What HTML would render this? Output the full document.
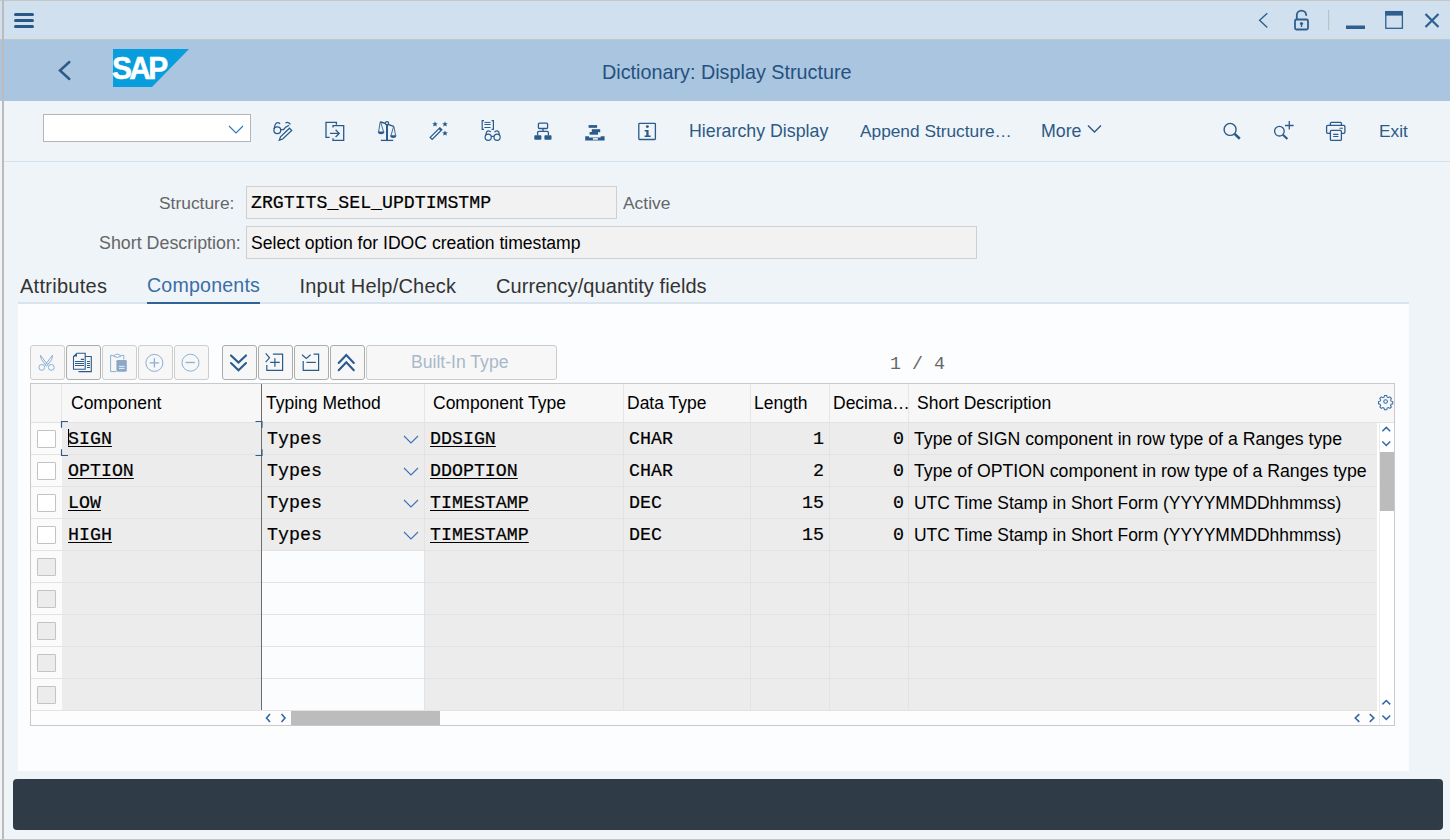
<!DOCTYPE html>
<html><head><meta charset="utf-8">
<style>
*{margin:0;padding:0;box-sizing:border-box}
html,body{width:1450px;height:840px;overflow:hidden;background:#eff4f9;font-family:"Liberation Sans",sans-serif}
.a{position:absolute}
.t{position:absolute;white-space:nowrap;line-height:1}
.mono{font-family:"Liberation Mono",monospace;-webkit-text-stroke:0.2px currentColor}
.ul{text-decoration:underline;text-decoration-thickness:1.4px;text-underline-offset:2px}
svg{position:absolute;overflow:visible}
</style></head><body>
<!-- outer frame -->
<div class="a" style="left:0;top:0;width:1450px;height:840px;background:#eff4f9"></div>
<!-- top bar -->
<div class="a" style="left:0;top:0;width:1450px;height:40px;background:#d1e0ee;border-bottom:1px solid #c3c6c9"></div>
<div class="a" style="left:0;top:0;width:1450px;height:1px;background:#c6c6c6"></div>
<!-- header band -->
<div class="a" style="left:0;top:40px;width:1450px;height:61px;background:#a9c5df"></div>
<!-- left frame line -->
<div class="a" style="left:2px;top:0;width:2px;height:840px;background:#bdbbb9"></div>
<div class="a" style="left:0;top:839px;width:1450px;height:1px;background:#c4c4c4"></div>


<!-- hamburger -->
<div class="a" style="left:14px;top:13px;width:20px;height:3px;border-radius:2px;background:#275887"></div>
<div class="a" style="left:14px;top:19px;width:20px;height:3px;border-radius:2px;background:#275887"></div>
<div class="a" style="left:14px;top:25px;width:20px;height:3px;border-radius:2px;background:#275887"></div>
<!-- top right window icons -->
<svg style="left:0;top:0" width="1450" height="40">
 <path d="M1267.3 13.2 L1259.6 20.3 L1267.3 27.4" fill="none" stroke="#2e5f8e" stroke-width="1.4"/>
 <rect x="1295" y="19.5" width="13" height="10" rx="1.5" fill="none" stroke="#2e5f8e" stroke-width="1.8"/>
 <path d="M1296.8 19.5 V15.3 a4.7 4.7 0 0 1 9.4 0 V15.8" fill="none" stroke="#2e5f8e" stroke-width="1.8"/>
 <circle cx="1301.5" cy="23.5" r="1.6" fill="#2e5f8e"/><rect x="1300.8" y="24" width="1.4" height="3" fill="#2e5f8e"/>
 <rect x="1328.2" y="10" width="1" height="20" fill="#b5bcc4"/>
 <rect x="1346" y="25.5" width="19" height="3.5" fill="#2e5f8e"/>
 <rect x="1385.8" y="11.6" width="16.6" height="16.7" fill="none" stroke="#2e5f8e" stroke-width="1.3"/>
 <rect x="1385.2" y="11" width="17.8" height="4.6" fill="#2e5f8e"/>
 <path d="M1425.5 14 L1438.5 27 M1438.5 14 L1425.5 27" stroke="#2e5f8e" stroke-width="2.2"/>
</svg>
<!-- header -->
<svg style="left:0;top:40px" width="300" height="61">
 <path d="M69.3 22 L60 30.5 L69.3 39" fill="none" stroke="#2f5a84" stroke-width="2.5" stroke-linecap="round"/>
 <path d="M113 9 H189 L152 47 H113 Z" fill="#089ddc"/>
</svg>
<div class="t" style="left:112px;top:52.5px;font-size:31.5px;font-weight:bold;color:#fff;letter-spacing:-2.8px;transform:scaleX(0.95);transform-origin:0 0;-webkit-text-stroke:0.5px #fff">SAP</div>
<div class="t" style="left:602px;top:62.5px;font-size:19.8px;color:#25517f">Dictionary: Display Structure</div>

<!-- toolbar -->
<div class="a" style="left:4px;top:161px;width:1446px;height:1px;background:#d3e0ed"></div>
<div class="a" style="left:43px;top:114px;width:208px;height:28px;background:#fff;border:1px solid #b5b5b5"></div>
<svg style="left:0;top:100px" width="1450" height="60">
 <path d="M229 26 L236 33 L243 26" fill="none" stroke="#2a78bf" stroke-width="1.15"/>
</svg>
<div class="t" style="left:689px;top:123px;font-size:17.8px;color:#2d5a85">Hierarchy Display</div>
<div class="t" style="left:860px;top:123px;font-size:17.3px;color:#2d5a85">Append Structure…</div>
<div class="t" style="left:1041px;top:123px;font-size:17.8px;color:#2d5a85">More</div>
<div class="t" style="left:1379px;top:123px;font-size:17.3px;color:#2d5a85">Exit</div>

<!-- form -->
<div class="t" style="left:159px;top:195px;font-size:17.4px;color:#666">Structure:</div>
<div class="a" style="left:246px;top:186px;width:371px;height:33px;background:#f2f2f2;border:1px solid #cfcfcf"></div>
<div class="t mono" style="left:251px;top:194px;font-size:18.2px;color:#000">ZRGTITS_SEL_UPDTIMSTMP</div>
<div class="t" style="left:623px;top:195px;font-size:17.4px;color:#666">Active</div>
<div class="t" style="left:99px;top:235px;font-size:17.85px;color:#666">Short Description:</div>
<div class="a" style="left:246px;top:226px;width:731px;height:33px;background:#f2f2f2;border:1px solid #cfcfcf"></div>
<div class="t" style="left:251px;top:235px;font-size:17.6px;color:#000">Select option for IDOC creation timestamp</div>

<!-- tabs -->
<div class="t" style="left:20px;top:276px;font-size:20px;color:#333;letter-spacing:0.28px">Attributes</div>
<div class="t" style="left:147px;top:276px;font-size:19.6px;color:#3a6ea5;letter-spacing:0.2px">Components</div>
<div class="t" style="left:299.5px;top:276px;font-size:20px;color:#333;letter-spacing:0.2px">Input Help/Check</div>
<div class="t" style="left:496px;top:276px;font-size:20px;color:#333;letter-spacing:0.07px">Currency/quantity fields</div>
<div class="a" style="left:18px;top:302px;width:1391px;height:2px;background:#dae4ef"></div>
<div class="a" style="left:147px;top:301.5px;width:113px;height:2.5px;background:#2f6297"></div>
<!-- panel -->
<div class="a" style="left:18px;top:304px;width:1391px;height:467px;background:#fcfdfe"></div>

<!-- status bar -->
<div class="a" style="left:13px;top:779px;width:1430px;height:51px;background:#2f3b47;border-radius:4px"></div>
<!-- table -->
<div class="a" style="left:30px;top:383px;width:1365px;height:343px;background:#fff;border:1px solid #c9c9c9"></div>
<div class="a" style="left:31px;top:384px;width:1363px;height:38px;background:#f7f7f7"></div>
<div class="a" style="left:31px;top:384px;width:30px;height:38px;background:#f7f7f7"></div>
<div class="a" style="left:61px;top:384px;width:1px;height:38px;background:#e6e6e6"></div>
<div class="a" style="left:424px;top:384px;width:1px;height:38px;background:#e6e6e6"></div>
<div class="a" style="left:623px;top:384px;width:1px;height:38px;background:#e6e6e6"></div>
<div class="a" style="left:750px;top:384px;width:1px;height:38px;background:#e6e6e6"></div>
<div class="a" style="left:829px;top:384px;width:1px;height:38px;background:#e6e6e6"></div>
<div class="a" style="left:908px;top:384px;width:1px;height:38px;background:#e6e6e6"></div>
<div class="a" style="left:31px;top:422px;width:31px;height:288px;background:#fbfbfb"></div>
<div class="a" style="left:62px;top:422px;width:1315px;height:288px;background:#ececec"></div>
<div class="a" style="left:262px;top:550px;width:162px;height:160px;background:#fbfcfd"></div>
<div class="a" style="left:31px;top:454px;width:1346px;height:1px;background:#e3e3e3"></div>
<div class="a" style="left:31px;top:486px;width:1346px;height:1px;background:#e3e3e3"></div>
<div class="a" style="left:31px;top:518px;width:1346px;height:1px;background:#e3e3e3"></div>
<div class="a" style="left:31px;top:550px;width:1346px;height:1px;background:#e3e3e3"></div>
<div class="a" style="left:31px;top:582px;width:1346px;height:1px;background:#e3e3e3"></div>
<div class="a" style="left:31px;top:614px;width:1346px;height:1px;background:#e3e3e3"></div>
<div class="a" style="left:31px;top:646px;width:1346px;height:1px;background:#e3e3e3"></div>
<div class="a" style="left:31px;top:678px;width:1346px;height:1px;background:#e3e3e3"></div>
<div class="a" style="left:31px;top:422px;width:1363px;height:1px;background:#e2e2e2"></div>
<div class="a" style="left:424px;top:422px;width:1px;height:288px;background:#e3e3e3"></div>
<div class="a" style="left:623px;top:422px;width:1px;height:288px;background:#e3e3e3"></div>
<div class="a" style="left:750px;top:422px;width:1px;height:288px;background:#e3e3e3"></div>
<div class="a" style="left:829px;top:422px;width:1px;height:288px;background:#e3e3e3"></div>
<div class="a" style="left:908px;top:422px;width:1px;height:288px;background:#e3e3e3"></div>
<div class="a" style="left:261px;top:384px;width:1px;height:326px;background:#6d6d6d"></div>
<div class="t" style="left:71px;top:395px;font-size:17.5px;color:#000">Component</div>
<div class="t" style="left:266px;top:395px;font-size:17.5px;color:#000">Typing Method</div>
<div class="t" style="left:433px;top:395px;font-size:17.5px;color:#000">Component Type</div>
<div class="t" style="left:627px;top:395px;font-size:17.5px;color:#000">Data Type</div>
<div class="t" style="left:754px;top:395px;font-size:17.5px;color:#000">Length</div>
<div class="t" style="left:833px;top:395px;font-size:17.5px;color:#000">Decima…</div>
<div class="t" style="left:917px;top:395px;font-size:17.5px;color:#000">Short Description</div>
<div class="a" style="left:37px;top:430px;width:19px;height:18px;background:#fff;border:1px solid #c3c3c3;border-radius:1px"></div>
<div class="a" style="left:37px;top:462px;width:19px;height:18px;background:#fff;border:1px solid #c3c3c3;border-radius:1px"></div>
<div class="a" style="left:37px;top:494px;width:19px;height:18px;background:#fff;border:1px solid #c3c3c3;border-radius:1px"></div>
<div class="a" style="left:37px;top:526px;width:19px;height:18px;background:#fff;border:1px solid #c3c3c3;border-radius:1px"></div>
<div class="a" style="left:37px;top:558px;width:19px;height:18px;background:#ececec;border:1px solid #c3c3c3;border-radius:1px"></div>
<div class="a" style="left:37px;top:590px;width:19px;height:18px;background:#ececec;border:1px solid #c3c3c3;border-radius:1px"></div>
<div class="a" style="left:37px;top:622px;width:19px;height:18px;background:#ececec;border:1px solid #c3c3c3;border-radius:1px"></div>
<div class="a" style="left:37px;top:654px;width:19px;height:18px;background:#ececec;border:1px solid #c3c3c3;border-radius:1px"></div>
<div class="a" style="left:37px;top:686px;width:19px;height:18px;background:#ececec;border:1px solid #c3c3c3;border-radius:1px"></div>
<div class="t mono ul" style="left:68px;top:430px;font-size:18.3px;color:#000">SIGN</div>
<div class="t mono" style="left:267px;top:430px;font-size:18.3px;color:#000">Types</div>
<div class="t mono ul" style="left:430px;top:430px;font-size:18.3px;color:#000">DDSIGN</div>
<div class="t mono" style="left:629px;top:430px;font-size:18.3px;color:#000">CHAR</div>
<div class="t mono" style="right:626px;top:430px;font-size:18.3px;color:#000">1</div>
<div class="t mono" style="right:546px;top:430px;font-size:18.3px;color:#000">0</div>
<div class="t" style="left:914px;top:431px;font-size:17.72px;color:#000">Type of SIGN component in row type of a Ranges type</div>
<div class="t mono ul" style="left:68px;top:462px;font-size:18.3px;color:#000">OPTION</div>
<div class="t mono" style="left:267px;top:462px;font-size:18.3px;color:#000">Types</div>
<div class="t mono ul" style="left:430px;top:462px;font-size:18.3px;color:#000">DDOPTION</div>
<div class="t mono" style="left:629px;top:462px;font-size:18.3px;color:#000">CHAR</div>
<div class="t mono" style="right:626px;top:462px;font-size:18.3px;color:#000">2</div>
<div class="t mono" style="right:546px;top:462px;font-size:18.3px;color:#000">0</div>
<div class="t" style="left:914px;top:463px;font-size:17.7px;color:#000">Type of OPTION component in row type of a Ranges type</div>
<div class="t mono ul" style="left:68px;top:494px;font-size:18.3px;color:#000">LOW</div>
<div class="t mono" style="left:267px;top:494px;font-size:18.3px;color:#000">Types</div>
<div class="t mono ul" style="left:430px;top:494px;font-size:18.3px;color:#000">TIMESTAMP</div>
<div class="t mono" style="left:629px;top:494px;font-size:18.3px;color:#000">DEC</div>
<div class="t mono" style="right:626px;top:494px;font-size:18.3px;color:#000">15</div>
<div class="t mono" style="right:546px;top:494px;font-size:18.3px;color:#000">0</div>
<div class="t" style="left:914px;top:495px;font-size:17.45px;color:#000">UTC Time Stamp in Short Form (YYYYMMDDhhmmss)</div>
<div class="t mono ul" style="left:68px;top:526px;font-size:18.3px;color:#000">HIGH</div>
<div class="t mono" style="left:267px;top:526px;font-size:18.3px;color:#000">Types</div>
<div class="t mono ul" style="left:430px;top:526px;font-size:18.3px;color:#000">TIMESTAMP</div>
<div class="t mono" style="left:629px;top:526px;font-size:18.3px;color:#000">DEC</div>
<div class="t mono" style="right:626px;top:526px;font-size:18.3px;color:#000">15</div>
<div class="t mono" style="right:546px;top:526px;font-size:18.3px;color:#000">0</div>
<div class="t" style="left:914px;top:527px;font-size:17.45px;color:#000">UTC Time Stamp in Short Form (YYYYMMDDhhmmss)</div>
<svg style="left:0;top:0" width="1450" height="840">
<path d="M404 436 L411 443 L418 436" fill="none" stroke="#3a72b0" stroke-width="1.1"/>
<path d="M404 468 L411 475 L418 468" fill="none" stroke="#3a72b0" stroke-width="1.1"/>
<path d="M404 500 L411 507 L418 500" fill="none" stroke="#3a72b0" stroke-width="1.1"/>
<path d="M404 532 L411 539 L418 532" fill="none" stroke="#3a72b0" stroke-width="1.1"/>
<path d="M61.5 427.8 V421.5 H68 M255.5 421.5 H262 V427.8 M61.5 449.2 V455.5 H68 M255.5 455.5 H262 V449.2" fill="none" stroke="#2d5b88" stroke-width="1.15"/>
<rect x="68" y="429" width="1.1" height="16.5" fill="#000"/>
</svg>
<div class="a" style="left:31px;top:710px;width:1349px;height:15px;background:#fdfdfe;border-top:1px solid #e3e3e3"></div>
<div class="a" style="left:291px;top:711px;width:149px;height:14px;background:#bcbcbc"></div>
<div class="a" style="left:1377px;top:423px;width:17px;height:302px;background:#fff;border-left:2px solid #fff"></div>
<div class="a" style="left:1379px;top:423px;width:1px;height:302px;background:#ebebeb"></div>
<div class="a" style="left:1380px;top:452px;width:14px;height:59px;background:#bcbcbc"></div>
<svg style="left:0;top:0" width="1450" height="840">
<path d="M270 714 L266.5 718 L270 722 M281.5 714 L285 718 L281.5 722" fill="none" stroke="#2f6aa6" stroke-width="1.6"/>
<path d="M1359.3 714.2 L1355.3 718 L1359.3 721.8 M1369.8 714.2 L1373.8 718 L1369.8 721.8" fill="none" stroke="#2f6aa6" stroke-width="1.6"/>
<path d="M1382.4 431.3 L1386.3 427.4 L1390.2 431.3 M1382.4 441.4 L1386.3 445.4 L1390.2 441.4" fill="none" stroke="#2f6aa6" stroke-width="1.5"/>
<path d="M1382.4 704.4 L1386.3 700.5 L1390.2 704.4 M1382.4 715.5 L1386.3 719.4 L1390.2 715.5" fill="none" stroke="#2f6aa6" stroke-width="1.5"/>
</svg>
<div class="a" style="left:30px;top:345px;width:35px;height:35px;background:#f7f7f7;border:1px solid #cdcdcd;border-radius:3px"></div>
<div class="a" style="left:66px;top:345px;width:35px;height:35px;background:#f7f7f7;border:1px solid #acacac;border-radius:3px"></div>
<div class="a" style="left:102px;top:345px;width:35px;height:35px;background:#f7f7f7;border:1px solid #cdcdcd;border-radius:3px"></div>
<div class="a" style="left:138px;top:345px;width:35px;height:35px;background:#f7f7f7;border:1px solid #cdcdcd;border-radius:3px"></div>
<div class="a" style="left:174px;top:345px;width:35px;height:35px;background:#f7f7f7;border:1px solid #cdcdcd;border-radius:3px"></div>
<div class="a" style="left:222px;top:345px;width:35px;height:35px;background:#f7f7f7;border:1px solid #acacac;border-radius:3px"></div>
<div class="a" style="left:258px;top:345px;width:35px;height:35px;background:#f7f7f7;border:1px solid #acacac;border-radius:3px"></div>
<div class="a" style="left:294px;top:345px;width:35px;height:35px;background:#f7f7f7;border:1px solid #acacac;border-radius:3px"></div>
<div class="a" style="left:330px;top:345px;width:35px;height:35px;background:#f7f7f7;border:1px solid #acacac;border-radius:3px"></div>
<div class="a" style="left:366px;top:345px;width:191px;height:35px;background:#f7f7f7;border:1px solid #cbcbcb;border-radius:3px"></div>
<div class="t" style="left:411px;top:354px;font-size:17.6px;color:#a9b9c9">Built-In Type</div>
<div class="t" style="left:890px;top:355px;font-size:18.3px;color:#666;white-space:pre;font-family:'Liberation Mono',monospace">1 / 4</div>
<!-- toolbar icons -->
<svg style="left:0;top:0" width="1450" height="200">
<g fill="none" stroke="#2b5b8b" stroke-width="1.3">
 <!-- glasses pencil -->
 <circle cx="277.3" cy="130.3" r="3.4"/>
 <path d="M274.2 129 C274.5 126 275.5 122.8 277.5 122.6 C279 122.5 279.8 123.3 280 124.2"/>
 <path d="M280.7 129.6 H283.5 C284.5 127.5 287 126 289 125.3"/>
 <path d="M285.5 123 C287 122 289.5 122.3 290.3 124.5"/>
 <path d="M279.3 140.2 L280.5 136.8 L289.5 128.2 L291.7 130.4 L282.7 139 Z"/>
 <!-- copy arrow -->
 <path d="M329.6 137.4 H326 V122.4 H336.4 V124.8"/>
 <path d="M333 127.5 V125.6 H343.7 V140.4 H333 V138.2"/>
 <path d="M330 133.4 H339.2 M335.6 129.8 L339.2 133.4 L335.6 137"/>
</g>
<!-- scales -->
<g fill="none" stroke="#2b5b8b">
 <path d="M380.2 121.8 L393.8 126.4" stroke-width="1.5"/>
 <circle cx="387" cy="123.2" r="1.6" stroke-width="1.3" fill="#eff4f9"/>
 <path d="M387 124.8 V140.2" stroke-width="2"/>
 <path d="M380.8 140.4 H393.2" stroke-width="1.3"/>
 <path d="M380.2 122 L378.6 131.8 M380.6 122 L383.6 131.8 M393.6 126.4 L391 135.6 M393.9 126.4 L395.6 135.6" stroke-width="0.9"/>
</g>
<g fill="#2b5b8b">
 <path d="M377.8 131.6 H384.4 A3.3 2.6 0 0 1 377.8 131.6 Z"/>
 <path d="M390.1 135.2 H396.4 A3.15 2.7 0 0 1 390.1 135.2 Z"/>
</g>
<!-- wand -->
<g fill="#2b5b8b">
 <path d="M435 121.3 L435.8 123.2 L437.8 123.3 L436.3 124.6 L436.8 126.6 L435 125.5 L433.2 126.6 L433.7 124.6 L432.2 123.3 L434.2 123.2 Z"/>
 <path d="M445 121.3 L445.8 123.2 L447.8 123.3 L446.3 124.6 L446.8 126.6 L445 125.5 L443.2 126.6 L443.7 124.6 L442.2 123.3 L444.2 123.2 Z"/>
 <path d="M445 130.4 L445.8 132.3 L447.8 132.4 L446.3 133.7 L446.8 135.7 L445 134.6 L443.2 135.7 L443.7 133.7 L442.2 132.4 L444.2 132.3 Z"/>
</g>
<path d="M430.2 137.4 L439.8 127.8 L441.8 129.8 L432.2 139.4 Z" fill="none" stroke="#2b5b8b" stroke-width="1.3"/>
<path d="M438.6 129 L440 127.6 L442 129.6 L440.6 131 Z" fill="#2b5b8b"/>
<!-- doc glasses -->
<g fill="none" stroke="#2b5b8b" stroke-width="1.2">
 <path d="M484 120.6 H482.2 V129.3 H484 M491.6 120.6 H493.4 V129.3 H491.6"/>
 <path d="M484.4 122.4 H490.6 M484.4 124.5 H490.6 M484.4 127.5 H490.6" stroke-width="1"/>
 <circle cx="488.2" cy="137.3" r="3.1"/>
 <circle cx="497.1" cy="137.3" r="3.1"/>
 <path d="M491.3 136.4 H494"/>
 <path d="M486 135 C486 133 486.5 130.8 488.5 130.8 C489.7 130.8 490.5 131.4 490.7 132.2"/>
 <path d="M494.6 132.2 C495 131 496 130.8 496.8 130.8 C498.6 130.8 499.3 133 499.3 135"/>
</g>
<!-- hierarchy -->
<g fill="none" stroke="#2b5b8b" stroke-width="1.3">
 <rect x="538.4" y="123.2" width="9.2" height="5.3" rx="1"/>
 <path d="M543 128.5 V131.4 M537.6 135.4 V132.6 Q537.6 131.4 538.8 131.4 H547.2 Q548.4 131.4 548.4 132.6 V135.4"/>
</g>
<g fill="#2b5b8b">
 <rect x="534.3" y="135.3" width="7.1" height="4.5" rx="0.8"/>
 <rect x="544.4" y="135.3" width="7.1" height="4.5" rx="0.8"/>
 <!-- stack -->
 <rect x="588.6" y="125.1" width="8.5" height="2.7"/>
 <rect x="591.8" y="129.2" width="8.4" height="3"/>
 <rect x="589.6" y="132" width="8.4" height="2.7"/>
 <path d="M585.2 136.2 H589 V137.4 H600.7 V136.2 H604.6 V140.6 H585.2 Z"/>
</g>
<rect x="592.9" y="138.1" width="5" height="1.6" fill="#eff4f9"/>
<!-- info -->
<rect x="638.8" y="123.3" width="16.6" height="16.2" rx="0.8" fill="none" stroke="#2b5b8b" stroke-width="1.3"/>
<g fill="#2b5b8b">
 <ellipse cx="647.4" cy="126.6" rx="1.5" ry="1.4"/>
 <path d="M644.6 130.1 H648.6 V135.6 H650.6 V137.1 H644.6 V135.6 H646.3 V131.4 H644.6 Z"/>
</g>
<!-- search -->
<g fill="none" stroke="#2b5b8b">
 <circle cx="1230.1" cy="129.4" r="6" stroke-width="1.4"/>
 <path d="M1234.6 133.9 L1239.8 138.7" stroke-width="2.6"/>
 <circle cx="1279.4" cy="131.2" r="4.8" stroke-width="1.3"/>
 <path d="M1282.9 134.8 L1287.4 139" stroke-width="2.2"/>
 <path d="M1285 125.5 H1293.6 M1289.3 121 V129.6" stroke-width="1.3"/>
 <!-- print -->
 <path d="M1330.4 125.3 V123.2 Q1330.4 122.3 1331.3 122.3 H1340.5 Q1341.4 122.3 1341.4 123.2 V125.3" stroke-width="1.3"/>
 <path d="M1330.4 133.4 H1327.7 Q1326.6 133.4 1326.6 132.3 V126.4 Q1326.6 125.3 1327.7 125.3 H1343.8 Q1344.9 125.3 1344.9 126.4 V132.3 Q1344.9 133.4 1343.8 133.4 H1341.4" stroke-width="1.3"/>
 <rect x="1330.4" y="130.4" width="11" height="10" rx="1" stroke-width="1.3"/>
 <path d="M1339.5 128.3 H1342.9 M1333.2 134.4 H1338.4 M1333.2 136.5 H1338.4" stroke-width="1.1"/>
</g>
</svg>

<!-- more icons -->
<svg style="left:0;top:0" width="1450" height="840">
 <!-- More chevron -->
 <path d="M1088 125.5 L1094.5 132 L1101 125.5" fill="none" stroke="#2d5a85" stroke-width="1.4"/>
 <!-- scissors (disabled) -->
 <g fill="none" stroke="#89b0d6" stroke-width="1">
  <circle cx="41.8" cy="367.4" r="2.9"/>
  <circle cx="51.3" cy="367.4" r="2.9"/>
  <path d="M40.3 355.2 L48 365 M52.6 355.2 L45 365 M40.3 355.2 L41.5 359.5 L46.5 366.3 M52.6 355.2 L51.7 359.5 L46.5 366.3"/>
 </g>
 <!-- copy (enabled) -->
 <g fill="none" stroke="#2b5b8b" stroke-width="1.1">
  <path d="M77 353.2 H85.2 V369.3 H73.5 V356.6 Z"/>
  <path d="M85.2 356.5 H91.3 V371.6 H78.5"/>
  <path d="M80.8 359.4 H84 M75 361.5 H84 M75 363.5 H84 M75 365.5 H84 M87 361.5 H90 M87 363.5 H90 M87 365.5 H90 M87 367.5 H90"/>
 </g>
 <path d="M73.5 356.6 L77 353.2 V356.6 Z" fill="#2b5b8b"/>
 <!-- paste (disabled) -->
 <g fill="none" stroke="#89b0d6" stroke-width="1">
  <path d="M116 371.6 H110.6 V355.4 H113.5 M121 355.4 H123.8 V359.5"/>
  <path d="M113.5 356.2 Q117.2 352 121 356.2 Q117.2 358.6 113.5 356.2 Z"/>
 </g>
 <rect x="116.4" y="360" width="10.4" height="11.8" rx="1.2" fill="#8aa9c8"/>
 <path d="M119 366.4 H124.5 M119 368.4 H124.5" stroke="#f7f7f7" stroke-width="0.9"/>
 <!-- plus circle (disabled) -->
 <g fill="none" stroke="#89b0d6" stroke-width="1">
  <circle cx="154.4" cy="362.9" r="8.5"/>
  <path d="M149.7 362.9 H159.1 M154.4 358.2 V367.6" stroke-width="1.3"/>
  <circle cx="190.5" cy="362.7" r="8.5"/>
  <path d="M185.6 362.5 H194.9" stroke-width="1.3"/>
 </g>
 <!-- double chevron down -->
 <g fill="none" stroke="#2b5b8b" stroke-width="2.1" stroke-linecap="round">
  <path d="M231 355.4 L238.5 362.6 L246 355.4 M231 363 L238.5 370.2 L246 363"/>
  <path d="M338.7 363 L346.3 355 L353.8 363 M338.7 370.2 L346.3 362.3 L353.8 370.2"/>
 </g>
 <!-- insert row -->
 <g fill="none" stroke="#2b5b8b" stroke-width="1.2">
  <path d="M265.7 353.4 L269.5 357.8 L265.7 362.1"/>
  <path d="M272.9 354.2 H282.6 V370.4 H266.8 V365.1"/>
  <path d="M270.2 362.4 H279.8 M274.9 358.2 V366.8"/>
  <path d="M302 354.7 L306.3 358.4 L310.6 354.7"/>
  <path d="M313.6 354.2 H318.6 V370.4 H303.2 V360.9"/>
  <path d="M306.4 362.4 H315.8"/>
 </g>
 <!-- gear -->
 <g fill="none" stroke="#3a6fa5" stroke-width="1.25" transform="translate(1385.6 401.5) scale(0.84) translate(-1385.3 -401.3)">
  <path d="M1384 394.2 h2.6 l0.5 1.9 l1.5 0.7 l1.8 -1 l1.8 1.8 l-1 1.8 l0.7 1.5 l1.9 0.5 v2.6 l-1.9 0.5 l-0.7 1.5 l1 1.8 l-1.8 1.8 l-1.8 -1 l-1.5 0.7 l-0.5 1.9 h-2.6 l-0.5 -1.9 l-1.5 -0.7 l-1.8 1 l-1.8 -1.8 l1 -1.8 l-0.7 -1.5 l-1.9 -0.5 v-2.6 l1.9 -0.5 l0.7 -1.5 l-1 -1.8 l1.8 -1.8 l1.8 1 l1.5 -0.7 Z"/>
  <circle cx="1385.3" cy="401.3" r="2.2"/>
 </g>
</svg>

<div id="content"></div>
</body></html>
